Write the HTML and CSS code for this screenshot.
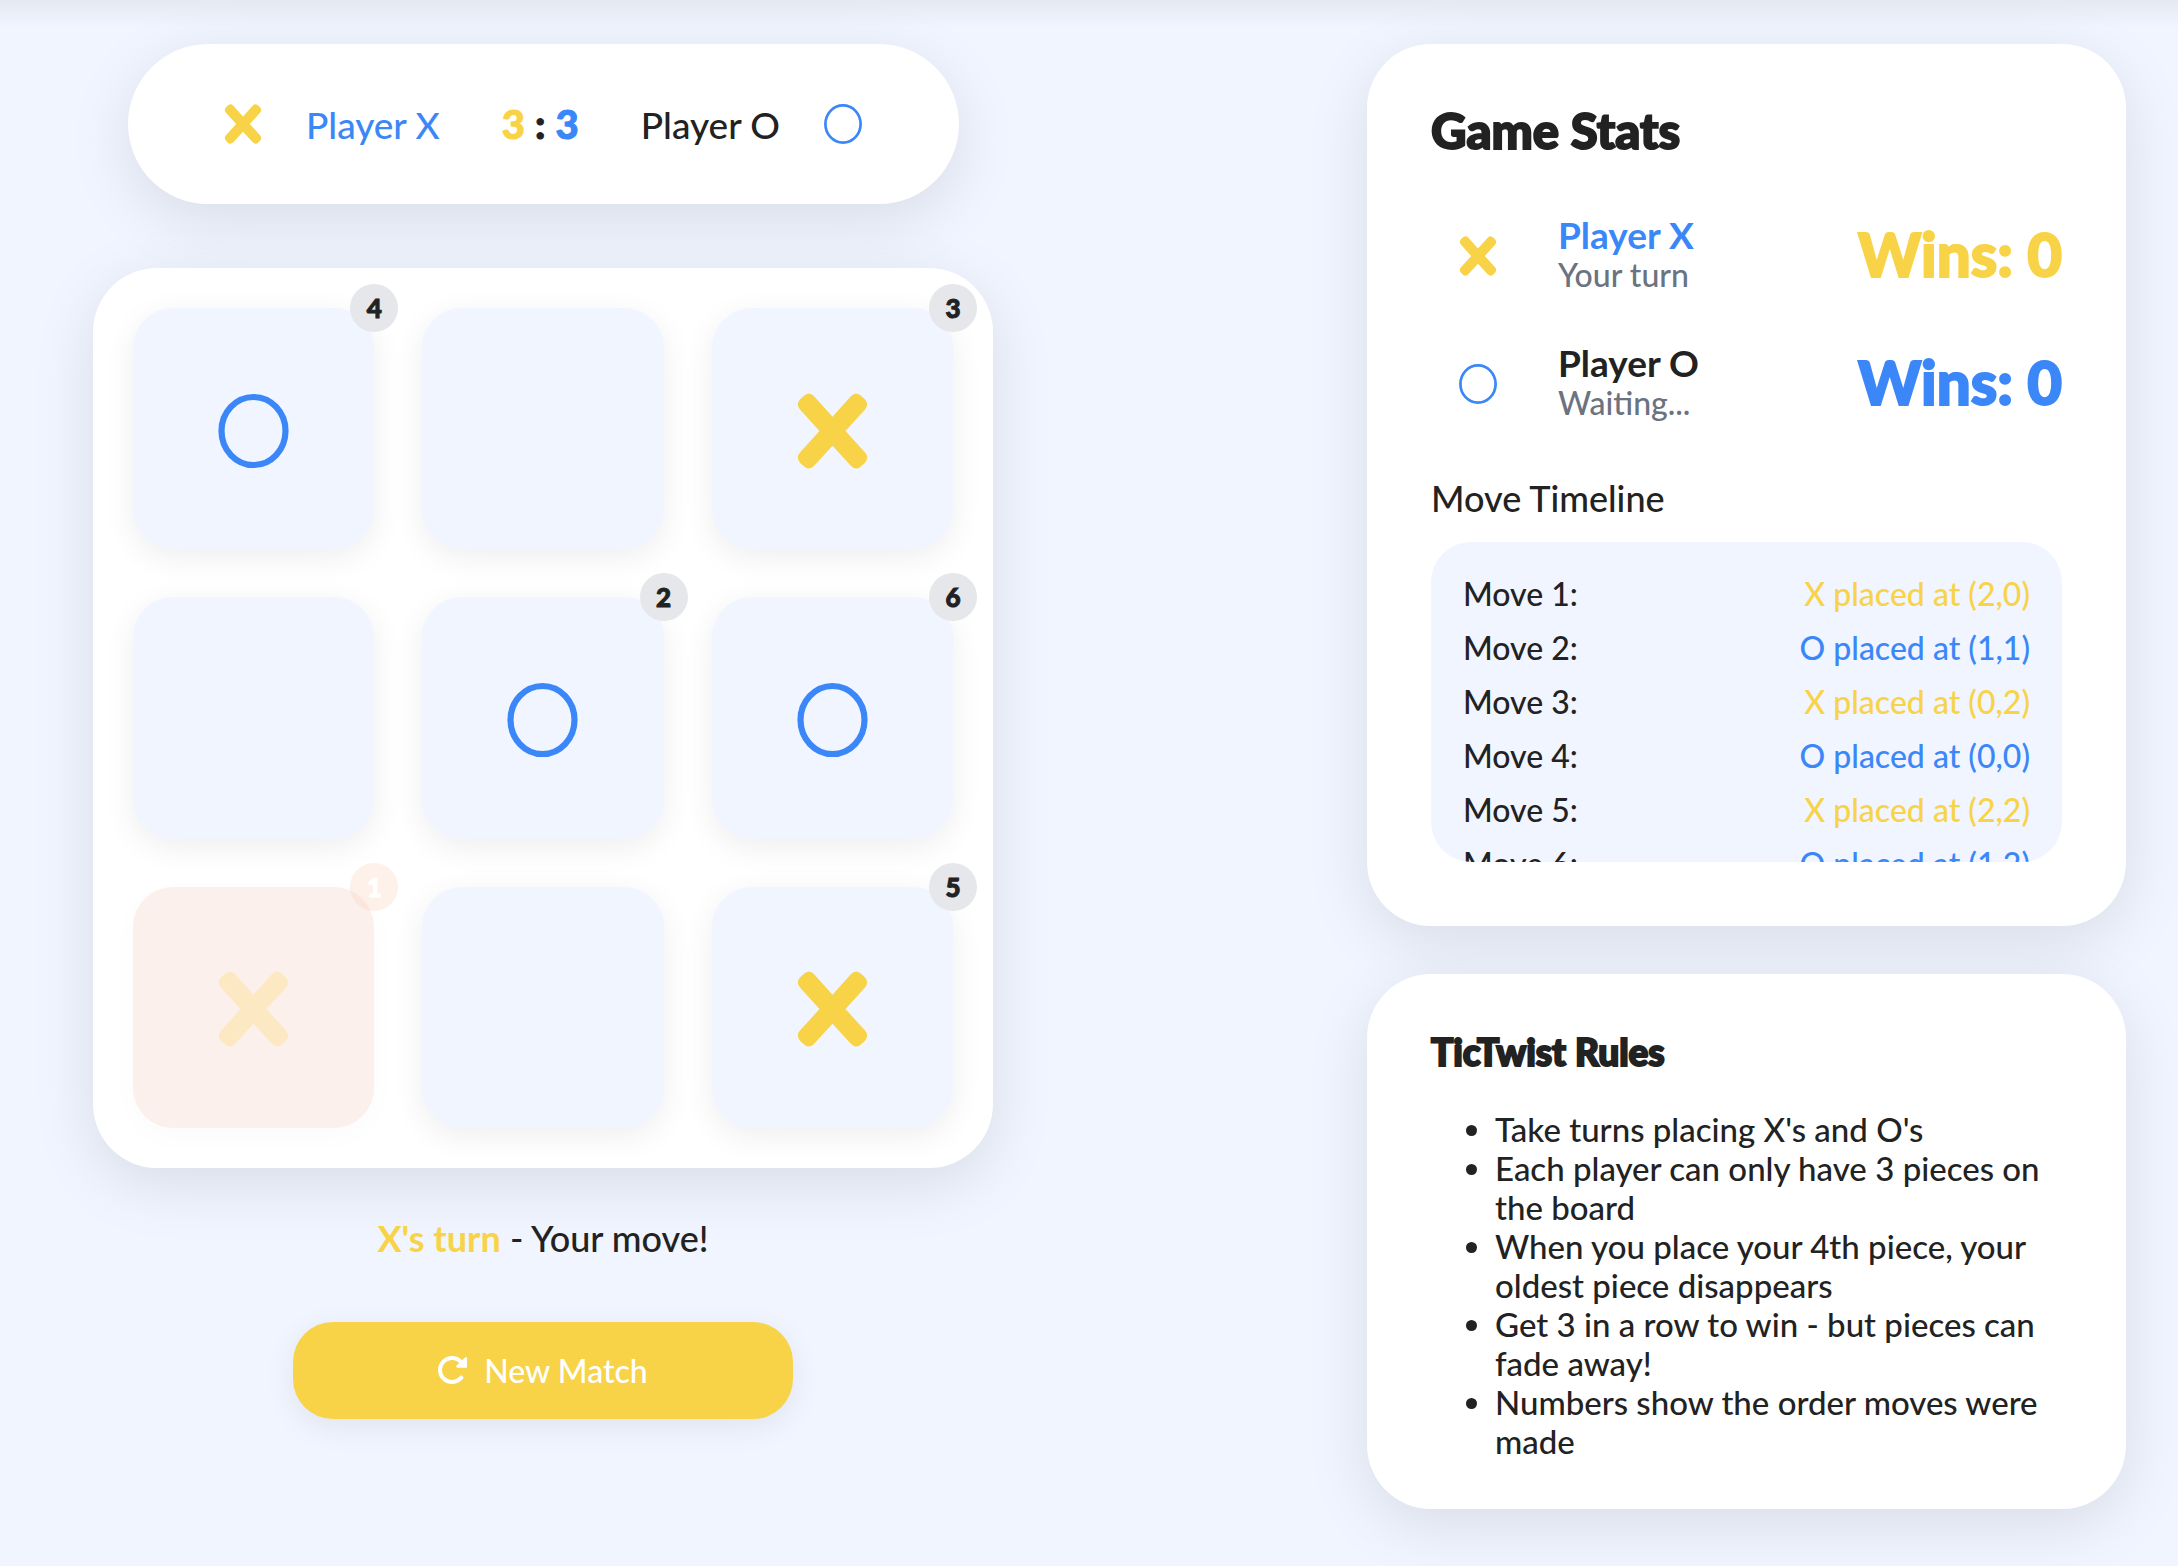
FILE: index.html
```html
<!DOCTYPE html>
<html lang="en">
<head>
<meta charset="utf-8">
<meta name="viewport" content="width=device-width, initial-scale=1">
<title>TicTwist</title>
<link rel="stylesheet" href="styles.css">
</head>
<body>
<svg class="sprite" aria-hidden="true">
  <symbol id="mark-x" viewBox="0 0 212 228">
    <path d="M106 71 L161 10 Q178 -8 196 12 Q220 32 203 50 L145 114 L203 178 Q220 196 196 216 Q178 236 161 218 L106 158 L51 218 Q34 236 16 216 Q-8 196 9 178 L67 114 L9 50 Q-8 32 16 12 Q34 -8 51 10Z" fill="currentColor"/>
  </symbol>
  <symbol id="mark-o" viewBox="0 0 71 76">
    <ellipse cx="35.5" cy="38" rx="32" ry="34" fill="none" stroke="currentColor" stroke-width="6.2"/>
  </symbol>
  <symbol id="mark-o-thin" viewBox="0 0 38 40">
    <ellipse cx="19" cy="20" rx="17.6" ry="18.6" fill="none" stroke="currentColor" stroke-width="2.7"/>
  </symbol>
</svg>

<main class="page">
  <section class="game" aria-label="Game">
    <div class="scorebar">
      <svg class="icon gold"><use href="#mark-x"/></svg>
      <span class="name blue">Player X</span>
      <span class="score"><b class="gold">3</b> <b>:</b> <b class="blue">3</b></span>
      <span class="name">Player O</span>
      <svg class="icon blue"><use href="#mark-o-thin"/></svg>
    </div>

    <div class="board">
      <button class="cell blue" aria-label="O"><svg class="mark"><use href="#mark-o"/></svg><span class="order">4</span></button>
      <button class="cell" aria-label="Empty"></button>
      <button class="cell gold" aria-label="X"><svg class="mark"><use href="#mark-x"/></svg><span class="order">3</span></button>
      <button class="cell" aria-label="Empty"></button>
      <button class="cell blue" aria-label="O"><svg class="mark"><use href="#mark-o"/></svg><span class="order">2</span></button>
      <button class="cell blue" aria-label="O"><svg class="mark"><use href="#mark-o"/></svg><span class="order">6</span></button>
      <button class="cell fading" aria-label="X, fading"><svg class="mark"><use href="#mark-x"/></svg><span class="order">1</span></button>
      <button class="cell" aria-label="Empty"></button>
      <button class="cell gold" aria-label="X"><svg class="mark"><use href="#mark-x"/></svg><span class="order">5</span></button>
    </div>

    <p class="status"><b class="gold">X's turn</b> - Your move!</p>

    <button class="new-match">
      <svg class="refresh" viewBox="0 0 30 28" aria-hidden="true">
        <path d="M23 6 A12 12 0 1 0 23.2 21.6" fill="none" stroke="currentColor" stroke-width="4" stroke-linecap="round"/>
        <path d="M27.3 1.3 Q29 0.6 29 2.5 V11.7 H19.5 Q17.3 11.2 18.6 9.6Z" fill="currentColor"/>
      </svg>
      New Match
    </button>
  </section>

  <aside class="side">
    <section class="card">
      <h1 class="title">Game Stats</h1>
      <div class="player">
        <svg class="icon gold"><use href="#mark-x"/></svg>
        <div class="who"><strong class="blue">Player X</strong><span>Your turn</span></div>
        <span class="wins gold">Wins: 0</span>
      </div>
      <div class="player">
        <svg class="icon blue"><use href="#mark-o-thin"/></svg>
        <div class="who"><strong>Player O</strong><span>Waiting...</span></div>
        <span class="wins blue">Wins: 0</span>
      </div>
      <h2 class="subtitle">Move Timeline</h2>
      <ol class="timeline">
        <li><span>Move 1:</span><span class="gold">X placed at (2,0)</span></li>
        <li><span>Move 2:</span><span class="blue">O placed at (1,1)</span></li>
        <li><span>Move 3:</span><span class="gold">X placed at (0,2)</span></li>
        <li><span>Move 4:</span><span class="blue">O placed at (0,0)</span></li>
        <li><span>Move 5:</span><span class="gold">X placed at (2,2)</span></li>
        <li><span>Move 6:</span><span class="blue">O placed at (1,2)</span></li>
      </ol>
    </section>

    <section class="card rules">
      <h2 class="rules-title">TicTwist Rules</h2>
      <ul>
        <li>Take turns placing X's and O's</li>
        <li>Each player can only have 3 pieces on the board</li>
        <li>When you place your 4th piece, your oldest piece disappears</li>
        <li>Get 3 in a row to win - but pieces can fade away!</li>
        <li>Numbers show the order moves were made</li>
      </ul>
    </section>
  </aside>
</main>
</body>
</html>
```
FILE: styles.css
```css
:root {
  --gold: #f8d347;
  --blue: #3b87f8;
  --ink: #222;
  --muted: #6b7280;
  --page: #f0f5ff;
  --lift: 0 16px 64px rgba(0, 0, 0, .1);
  --lift-small: 0 8px 32px rgba(0, 0, 0, .07);
}

* { box-sizing: border-box; }

body {
  margin: 0;
  min-height: 100vh;
  background: linear-gradient(rgba(0, 0, 0, .05), transparent 28px) no-repeat var(--page);
  color: var(--ink);
  font: 500 32px/39px Lato, sans-serif;
}

h1, h2, p, ul, ol { margin: 0; padding: 0; }
button { border: 0; font: inherit; cursor: pointer; }

.sprite { position: absolute; width: 0; height: 0; }
.gold { color: var(--gold); }
.blue { color: var(--blue); }

.page {
  display: grid;
  grid-template-columns: 1fr 1fr;
  column-gap: 6px;
  align-items: start;
  padding: 44px 0 56px;
}

.icon { width: 38px; height: 40px; flex: none; }

/* Game column */
.game {
  display: flex;
  flex-direction: column;
  align-items: center;
}

.scorebar {
  display: flex;
  align-items: center;
  justify-content: center;
  gap: 44px;
  width: 100%;
  max-width: 831px;
  height: 160px;
  border-radius: 80px;
  background: #fff;
  box-shadow: var(--lift);
}
.name { font-size: 37px; }
.score { margin: 0 18px; font-size: 40px; }
.score b { font-weight: 900; -webkit-text-stroke: 1px currentColor; }

.board {
  display: grid;
  grid-template-columns: repeat(3, 1fr);
  gap: 48px;
  width: 100%;
  max-width: 900px;
  margin-top: 64px;
  padding: 40px;
  border-radius: 64px;
  background: #fff;
  box-shadow: var(--lift);
}
.cell {
  position: relative;
  display: grid;
  place-items: center;
  aspect-ratio: 1;
  padding: 4px 0 0;
  border-radius: 40px;
  background: var(--page);
  box-shadow: var(--lift-small);
}
.mark { width: 71px; height: 76px; }
.order {
  position: absolute;
  top: -24px;
  right: -24px;
  width: 48px;
  height: 48px;
  border-radius: 50%;
  background: #e5e7eb;
  color: var(--ink);
  font-size: 26px;
  font-weight: 900;
  line-height: 48px;
  -webkit-text-stroke: 1px currentColor;
}
.fading {
  background: #fbf0ec;
  color: #fce9c3;
  box-shadow: 0 8px 32px rgba(0, 0, 0, .02);
}
.fading .order { background: rgba(249, 208, 186, .3); color: #fff; }

.status { margin-top: 48px; font-size: 36px; line-height: 44px; }

.new-match {
  display: flex;
  align-items: center;
  justify-content: center;
  gap: 16px;
  width: 100%;
  max-width: 500px;
  height: 97px;
  margin-top: 62px;
  border-radius: 40px;
  background: var(--gold);
  color: #fff;
  box-shadow: var(--lift-small);
}
.refresh { width: 30px; height: 28px; }

/* Side column */
.side {
  display: flex;
  flex-direction: column;
  gap: 48px;
  width: 100%;
  max-width: 811px;
  margin-left: auto;
  padding-right: 52px;
}
.card {
  padding: 64px;
  border-radius: 64px;
  background: #fff;
  box-shadow: var(--lift);
}
.title, .rules-title, .wins { font-weight: 900; -webkit-text-stroke: 2px currentColor; }
.title { font-size: 49px; line-height: 44px; margin-bottom: 40px; }

.player {
  display: flex;
  align-items: center;
  height: 128px;
  padding-left: 28px;
}
.who { display: flex; flex-direction: column; margin-left: 61px; padding-bottom: 4px; }
.who strong { font-size: 37px; line-height: 40px; }
.who span { color: var(--muted); }
.wins { margin-left: auto; padding-bottom: 4px; font-size: 60px; line-height: 64px; }

.subtitle { margin-top: 28px; font-size: 36px; font-weight: 500; line-height: 44px; }
.timeline {
  height: 320px;
  margin-top: 22px;
  padding: 32px;
  overflow: hidden;
  border-radius: 40px;
  background: var(--page);
  list-style: none;
}
.timeline li { display: flex; justify-content: space-between; margin-bottom: 15px; }

.rules { padding: 56px 64px 48px; }
.rules-title { font-size: 37px; line-height: 44px; }
.rules ul { margin-top: 36px; padding-left: 64px; font-size: 33px; }
```
